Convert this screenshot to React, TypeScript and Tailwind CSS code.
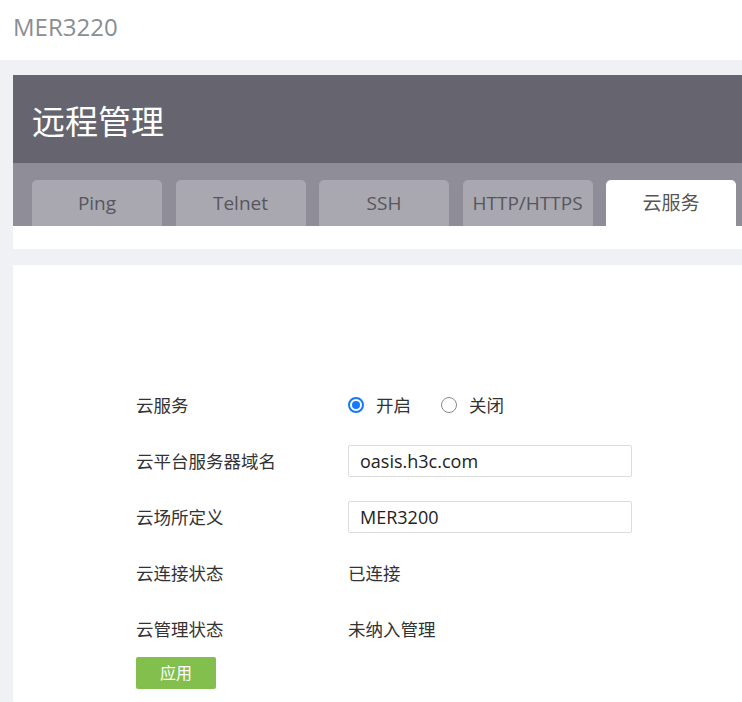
import React from 'react';

const tabs = ['Ping', 'Telnet', 'SSH', 'HTTP/HTTPS', '云服务'];

const Radio: React.FC<{ checked?: boolean; label: string }> = ({ checked, label }) => (
  <label className="flex items-center gap-[12px]">
    {checked ? (
      <span className="w-[16px] h-[16px] rounded-full border-2 border-[#1677ff] flex items-center justify-center">
        <span className="w-[8px] h-[8px] rounded-full bg-[#1677ff]" />
      </span>
    ) : (
      <span className="w-[16px] h-[16px] rounded-full border border-[#8a8a8a]" />
    )}
    <span>{label}</span>
  </label>
);

export default function App() {
  const font = { fontFamily: '"Open Sans", "Noto Sans CJK SC", sans-serif' };

  return (
    <div className="w-[742px] h-[702px] overflow-hidden bg-white text-[#333]" style={font}>
      {/* device name */}
      <div className="h-[60px] pl-[13px] pt-[11px] text-[24px] leading-[32px] text-[#8a8d93]">MER3220</div>

      <div className="bg-[#f0f1f5] pl-[13px] pt-[15px]">
        {/* page title */}
        <div className="h-[88px] bg-[#66656f] pl-[19px] flex items-center pt-[6px] text-[33px] text-white">
          远程管理
        </div>

        {/* tabs */}
        <div className="h-[63px] bg-[#8f8d97] pl-[19px] pt-[17px] flex items-end gap-[13.5px]">
          {tabs.map(t => (
            <div
              key={t}
              className={
                'w-[130px] h-[46px] rounded-t-[5px] flex items-center justify-center text-[19px] shrink-0 ' +
                (t === '云服务' ? 'bg-white text-[#555]' : 'bg-[#a9a8b0] text-[#56565c]')
              }
            >
              {t}
            </div>
          ))}
        </div>

        <div className="h-[23px] bg-white" />
        <div className="h-[16px]" />

        {/* form */}
        <div className="bg-white h-[437px] pl-[123px] pt-[112px] text-[17.5px]">
          <div className="grid grid-cols-[212px_1fr] auto-rows-[56px] items-center">
            <div>云服务</div>
            <div className="flex items-center gap-[30px]">
              <Radio checked label="开启" />
              <Radio label="关闭" />
            </div>

            <div>云平台服务器域名</div>
            <div>
              <input
                readOnly
                value="oasis.h3c.com"
                className="w-[284px] h-[32px] border border-[#dcdcdc] rounded-[2px] px-[11px] text-[18px] text-[#222] outline-none"
                style={font}
              />
            </div>

            <div>云场所定义</div>
            <div>
              <input
                readOnly
                value="MER3200"
                className="w-[284px] h-[32px] border border-[#dcdcdc] rounded-[2px] px-[11px] text-[18px] text-[#222] outline-none"
                style={font}
              />
            </div>

            <div>云连接状态</div>
            <div>已连接</div>

            <div>云管理状态</div>
            <div>未纳入管理</div>
          </div>

          <button className="w-[80px] h-[32px] bg-[#82bf4c] rounded-[2px] text-white text-[16px]">
            应用
          </button>
        </div>
      </div>
    </div>
  );
}
